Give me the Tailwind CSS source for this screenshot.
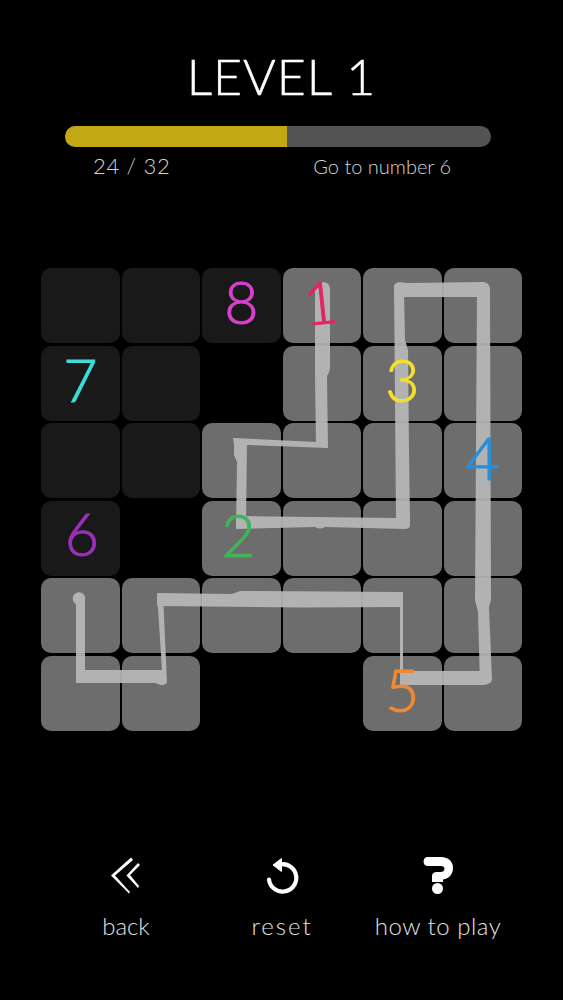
<!DOCTYPE html>
<html>
<head>
<meta charset="utf-8">
<script src="https://cdn.jsdelivr.net/npm/@tailwindcss/browser@4"></script>
</head>
<body class="bg-black">
<div class="relative w-[563px] h-[1000px] bg-black text-white font-['Lato',sans-serif] font-light overflow-hidden">
  <h1 class="pt-[46px] h-[126px] text-center text-[50px] leading-[60px] font-light tracking-[1px] [-webkit-text-stroke:0.5px_currentColor]">LEVEL 1</h1>
  <div class="ml-[65px] w-[426px] h-[21px] rounded-full bg-[#535354] overflow-hidden">
    <div class="w-[222px] h-full bg-[#c3a816]"></div>
  </div>
  <div class="flex justify-between pl-[93px] pr-[112px] pt-[6px] h-[121px] text-[#d4d4d4] leading-[26px]">
    <span class="text-[22px] tracking-[0.7px]">24 / 32</span>
    <span class="text-[20px]">Go to number 6</span>
  </div>
  <div class="ml-[41px] w-[481px] h-[463px] grid grid-cols-6 grid-rows-6 gap-x-[2px] gap-y-[2.5px] text-[59px] leading-none [-webkit-text-stroke:1px_currentColor]">
    <div class="rounded-[10px] bg-[#1a191a]"></div>
    <div class="rounded-[10px] bg-[#1a191a]"></div>
    <div class="rounded-[10px] bg-[#1a191a] flex items-center justify-center text-[#d93fd0]"><span class="relative z-10 mb-[8px]">8</span></div>
    <div class="rounded-[10px] bg-[#6e6d6e] flex items-center justify-center text-[#e0255f]"><span class="relative z-10 mb-[8px] mr-[4px] -rotate-6">1</span></div>
    <div class="rounded-[10px] bg-[#6e6d6e]"></div>
    <div class="rounded-[10px] bg-[#6e6d6e]"></div>

    <div class="rounded-[10px] bg-[#1a191a] flex items-center justify-center text-[#3cdcd8]"><span class="relative z-10 mb-[7px]">7</span></div>
    <div class="rounded-[10px] bg-[#1a191a]"></div>
    <div></div>
    <div class="rounded-[10px] bg-[#6e6d6e]"></div>
    <div class="rounded-[10px] bg-[#6e6d6e] flex items-center justify-center text-[#f5df2e]"><span class="relative z-10 mb-[7px]">3</span></div>
    <div class="rounded-[10px] bg-[#6e6d6e]"></div>

    <div class="rounded-[10px] bg-[#1a191a]"></div>
    <div class="rounded-[10px] bg-[#1a191a]"></div>
    <div class="rounded-[10px] bg-[#6e6d6e]"></div>
    <div class="rounded-[10px] bg-[#6e6d6e]"></div>
    <div class="rounded-[10px] bg-[#6e6d6e]"></div>
    <div class="rounded-[10px] bg-[#6e6d6e] flex items-center justify-center text-[#2a8fd8]"><span class="relative z-10 mb-[7px]">4</span></div>

    <div class="rounded-[10px] bg-[#1a191a] flex items-center justify-center text-[#9a30b8]"><span class="relative z-10 mb-[10px] ml-[3px]">6</span></div>
    <div></div>
    <div class="rounded-[10px] bg-[#6e6d6e] flex items-center justify-center text-[#3fb55a]"><span class="relative z-10 mb-[7px] mr-[6px]">2</span></div>
    <div class="rounded-[10px] bg-[#6e6d6e]"></div>
    <div class="rounded-[10px] bg-[#6e6d6e]"></div>
    <div class="rounded-[10px] bg-[#6e6d6e]"></div>

    <div class="rounded-[10px] bg-[#6e6d6e]"></div>
    <div class="rounded-[10px] bg-[#6e6d6e]"></div>
    <div class="rounded-[10px] bg-[#6e6d6e]"></div>
    <div class="rounded-[10px] bg-[#6e6d6e]"></div>
    <div class="rounded-[10px] bg-[#6e6d6e]"></div>
    <div class="rounded-[10px] bg-[#6e6d6e]"></div>

    <div class="rounded-[10px] bg-[#6e6d6e]"></div>
    <div class="rounded-[10px] bg-[#6e6d6e]"></div>
    <div></div>
    <div></div>
    <div class="rounded-[10px] bg-[#6e6d6e] flex items-center justify-center text-[#ee8a33]"><span class="relative z-10 mb-[7px]">5</span></div>
    <div class="rounded-[10px] bg-[#6e6d6e]"></div>
  </div>

  <svg class="absolute inset-0 z-[5] pointer-events-none" width="563" height="1000" viewBox="0 0 563 1000">
    <g fill="#b9b8b9" opacity="0.92">
      <path d="M315,375 L315,289 Q315,282 322,282 Q330,282 330,289 L330,368 Q330,372 327,376 L328,448 L316,446 Z"/>
      <path d="M233,438 L317,442 L328,443 L328,448 L248,445 L234,445 Z"/>
      <path d="M234,438 L247,440 L246,528 L236,528 L237,462 L234,455 Z"/>
      <path d="M236,516 L396,518 L410,518 L410,526 Q409,529 405,529 L325,527 Q320,530 315,527 L236,529 Z"/>
      <path d="M394,286 L404,290 L405,340 L408,350 L409,450 L410,520 L396,522 L395,400 Z"/>
      <path d="M394,286 Q394,283 400,282 L406,283 L484,282 Q490,283 490,290 L490,297 L394,297 Z"/>
      <path d="M477,290 L490,290 L491,600 L489,607 L492,680 Q491,684 484,685 L480,685 L478,612 L475,600 Z"/>
      <path d="M481,671 L400,671 L400,685 L484,685 Z"/>
      <path d="M400,671 L400,592 L403,592 L403,671 Z"/>
      <path d="M157,593 L232,594 L240,591 L403,592 L403,607 L300,607.5 L157,606 Z"/>
      <path d="M157,593 L163,593 L167,683 L163,685 L160,685 L154,682 L162,670 Z"/>
      <path d="M76,670 L162,670 L167,683 L163,685 L155,683 L76,683 Z"/>
      <path d="M76,683 L76,598 L85,598 L85,670 Z"/>
      <circle cx="79" cy="598.5" r="6.3"/>
    </g>
  </svg>

  <div class="ml-[48px] w-[468px] pt-[119px] grid grid-cols-3 text-center text-[24px] leading-[30px] text-[#e2e2e2]">
    <div class="flex flex-col items-center">
      <svg class="w-[56px] h-[50px]" viewBox="98 850 56 50" fill="#fff">
        <path d="M131,857.5 L133,860 L115,875.5 L130,892 L129,893.5 L111,875.5 Z"/>
        <path d="M138,863 L140,865 L130,875 L139,886 L138,888 L126.500,875.500 Z"/>
      </svg>
      <span class="mt-[11px]">back</span>
    </div>
    <div class="flex flex-col items-center">
      <svg class="w-[56px] h-[50px]" viewBox="254 850 56 50" fill="none" stroke="#fff">
        <path d="M269 879.500 A13.700 13.700 0 1 0 281 864.300" stroke-width="4.200" stroke-linecap="round"/>
        <path d="M281.500 858.500 L273 865 L281.500 871.500 Z" fill="#fff" stroke="#fff" stroke-width="1" stroke-linejoin="round"/>
      </svg>
      <span class="mt-[11px] tracking-[2px]">reset</span>
    </div>
    <div class="flex flex-col items-center">
      <svg class="w-[56px] h-[50px]" viewBox="410 850 56 50" fill="#fff">
        <path d="M427 857 H441 C449 857 453 862 453 868 C453 874 449 879 443 879.500 L443 882 H432 V876 C432 873.500 434 872 437 872 H441 C443 872 444.500 870.500 444.500 868.500 C444.500 867 443 866 441 866 H427 C422.500 866 422.500 857 427 857 Z"/>
        <circle cx="437.500" cy="888.500" r="5.500"/>
      </svg>
      <span class="mt-[11px] tracking-[0.5px]">how to play</span>
    </div>
  </div>
</div>
</body>
</html>
